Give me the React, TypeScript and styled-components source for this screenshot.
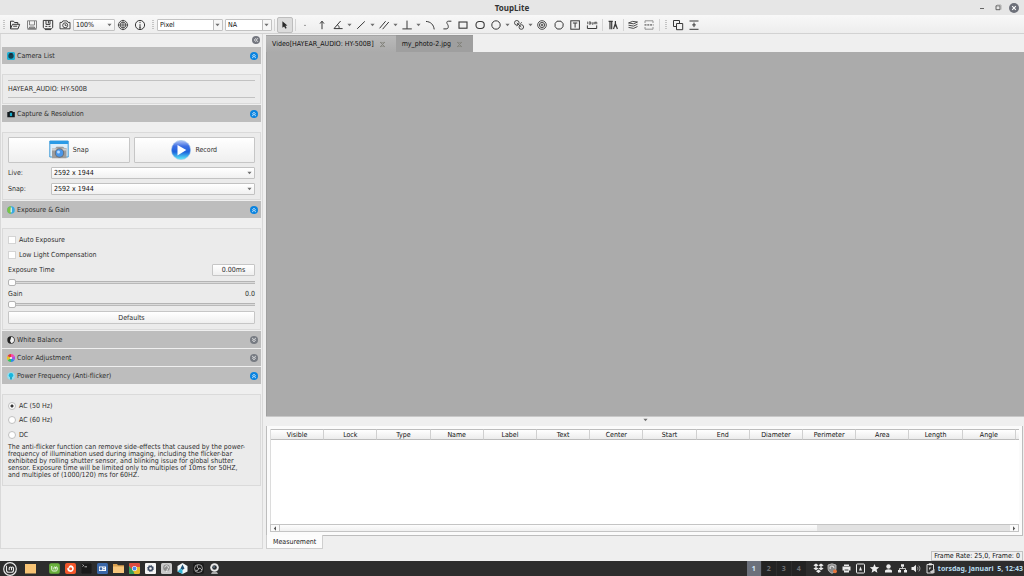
import React from "react";
import styled, { createGlobalStyle, css } from "styled-components";

const uiFont = `"DejaVu Sans Condensed", "DejaVu Sans", sans-serif`;
const deskFont = `"Noto Sans", sans-serif`;

const GlobalStyle = createGlobalStyle`
  * { box-sizing: border-box; }
  body { margin: 0; background: #efefef; }
  button, input, select { font: inherit; color: inherit; margin: 0; padding: 0; }
  svg { display: block; flex: none; }
`;

const Page = styled.div`
  display: flex;
  flex-direction: column;
  min-height: 100vh;
  background: #efefef;
  color: #2e2e2e;
  font: 7px/8px ${uiFont};
  white-space: nowrap;
`;

/* ---------- title bar ---------- */
const TitleBar = styled.header`
  display: grid;
  grid-template-columns: 1fr auto 1fr;
  align-items: center;
  height: 15px;
  background: #e6e6e6;
  color: #333;
`;
const Title = styled.h1`
  grid-column: 2;
  margin: 0;
  font: bold 8px/12px ${deskFont};
`;
const WindowButtons = styled.div`
  display: flex;
  justify-content: flex-end;
  gap: 6px;
  padding-right: 5px;
`;
const PlainButton = styled.button`
  display: flex;
  align-items: center;
  justify-content: center;
  width: 10px;
  height: 10px;
  border: 0;
  background: none;
`;

/* ---------- toolbar ---------- */
const Toolbar = styled.div`
  display: flex;
  align-items: center;
  height: 19px;
  padding-top: 2px;
  background: linear-gradient(#f8f8f8, #ededed);
  border-bottom: 1px solid #d2d2d2;
`;
const ToolGroup = styled.div<{ $width: number }>`
  display: flex;
  flex: none;
  align-items: center;
  justify-content: space-between;
  width: ${(p) => p.$width}px;
`;
const ToolButton = styled.button<{ $pressed?: boolean }>`
  display: flex;
  flex: none;
  align-items: center;
  justify-content: center;
  width: 16px;
  height: 16px;
  border: 1px solid transparent;
  border-radius: 2px;
  background: none;
  ${(p) =>
    p.$pressed &&
    css`
      background: #dcdcdc;
      border-color: #bdbdbd;
    `}
`;
const CaretButton = styled.button`
  display: flex;
  flex: none;
  align-items: center;
  justify-content: center;
  width: 6px;
  height: 16px;
  border: 0;
  background: none;
`;
const Divider = styled.span<{ $room: number }>`
  flex: none;
  width: ${(p) => p.$room}px;
  height: 12px;
  background: linear-gradient(#d4d4d4, #d4d4d4) center / 1px 100% no-repeat;
`;
const Grip = styled.span<{ $room: number }>`
  flex: none;
  width: ${(p) => p.$room}px;
  height: 10px;
  background: repeating-linear-gradient(#c4c4c4 0 1px, transparent 1px 2px) center / 2px 100% no-repeat;
`;

/* ---------- drop-downs ---------- */
const SelectBox = styled.span<{ $width?: number; $split?: boolean }>`
  display: grid;
  flex: ${(p) => (p.$width ? "none" : "1")};
  width: ${(p) => (p.$width ? p.$width + "px" : "auto")};
  height: 12px;
  align-items: center;
  border: 1px solid #c2c2c2;
  border-radius: 1px;
  color: #111;
  background: ${(p) =>
    p.$split
      ? "linear-gradient(to left, #f6f6f6 8px, #bcbcbc 8px 9px, #fff 9px)"
      : "linear-gradient(#fff, #f0f0f0)"};
  & > * { grid-area: 1 / 1; }
  & > svg { justify-self: end; margin-right: 2px; pointer-events: none; }
`;
const Select = styled.select`
  appearance: none;
  width: 100%;
  height: 10px;
  padding-left: 2px;
  border: 0;
  background: none;
  line-height: 10px;
`;

/* ---------- side panel ---------- */
const Main = styled.main`
  display: grid;
  grid-template-columns: 266px minmax(0, 1fr);
  flex: 1;
`;
const Side = styled.aside`
  width: 263px;
  padding: 0 1px;
  border: 1px solid #d9d9d9;
  border-top: 0;
`;
const SideTop = styled.div`
  display: flex;
  justify-content: flex-end;
  height: 13px;
  padding: 1px 0;
`;
const SectionHead = styled.div`
  display: flex;
  align-items: center;
  justify-content: space-between;
  height: 17px;
  padding: 0 2px 0 5px;
  background: #bdbdbd;
`;
const SectionTitle = styled.h2`
  display: flex;
  align-items: center;
  gap: 2px;
  margin: 0;
  font: inherit;
`;
const Section = styled.section`
  margin-bottom: 1px;
`;
const Group = styled.div<{ $top: number; $bottom: number }>`
  display: flex;
  flex-direction: column;
  margin-top: 10px;
  padding: ${(p) => p.$top}px 5px ${(p) => p.$bottom}px 5px;
  border: 1px solid #dadada;
  background: #ebebeb;
`;
const CameraItem = styled.div`
  padding: 4px 0;
  border: solid #c2c2c2;
  border-width: 1px 0;
`;
const Row = styled.div<{ $height: number }>`
  display: flex;
  align-items: center;
  justify-content: space-between;
  height: ${(p) => p.$height}px;
`;
const FieldLabel = styled.label`
  width: 43px;
`;
const BigButtons = styled.div`
  display: grid;
  grid-template-columns: 1fr 1fr;
  gap: 4px;
  margin-bottom: 2px;
`;
const RaisedButton = styled.button<{ $height: number; $width?: number }>`
  display: flex;
  align-items: center;
  justify-content: center;
  gap: 4px;
  width: ${(p) => (p.$width ? p.$width + "px" : "100%")};
  height: ${(p) => p.$height}px;
  border: 1px solid #c6c6c6;
  border-radius: 1px;
  background: linear-gradient(#fff, #efefef);
`;
const Choice = styled.label<{ $height: number }>`
  display: flex;
  align-items: center;
  gap: 3px;
  height: ${(p) => p.$height}px;
`;
const Tick = styled.input`
  appearance: none;
  width: 8px;
  height: 8px;
  border: 1px solid #d4d4d4;
  background: #fff;
`;
const Dot = styled(Tick)`
  border-radius: 50%;
  border-color: #c0c0c0;
  &:checked { background: radial-gradient(circle, #333 0 1px, #fff 2px); }
`;
const Slider = styled.input`
  appearance: none;
  width: 100%;
  height: 7px;
  background: linear-gradient(#b4b4b4 0 1px, #dadada 1px 2px, #b9b9b9 2px 3px) center / 100% 3px no-repeat;
  &::-webkit-slider-thumb {
    appearance: none;
    width: 8px;
    height: 7px;
    border: 1px solid #b4b4b4;
    border-radius: 2px;
    background: #fff;
  }
`;
const Note = styled.p`
  margin: 2px 0 0;
  line-height: 7px;
`;

/* ---------- work area ---------- */
const Work = styled.div`
  display: flex;
  flex-direction: column;
  min-width: 0;
`;
const DocTabs = styled.div`
  display: flex;
  height: 18px;
  padding-top: 1px;
`;
const DocTab = styled.div<{ $active?: boolean }>`
  display: flex;
  align-items: center;
  gap: 4px;
  padding: 0 8px 0 6px;
  color: #111;
  background: ${(p) => (p.$active ? "linear-gradient(#bababa, #ababab)" : "#9f9f9f")};
  border-top: 1px solid ${(p) => (p.$active ? "#a5a5a5" : "#979797")};
`;
const Canvas = styled.div`
  flex: 1;
  background: #ababab;
  border-left: 1px solid #a0a0a0;
`;
const Splitter = styled.div`
  display: flex;
  justify-content: center;
  height: 10px;
  padding-top: 1px;
  border-top: 1px solid #c8c8c8;
`;
const Sheet = styled.div`
  display: flex;
  flex-direction: column;
  height: 110px;
  margin-right: 1px;
  padding: 3px;
  border: solid #bdbdbd;
  border-width: 0 1px 1px;
  background: #fbfbfb;
`;
const Grid = styled.div`
  flex: 1;
  background: #fff;
  border-left: 1px solid #dcdcdc;
`;
const Table = styled.table`
  width: 100%;
  table-layout: fixed;
  border-collapse: separate;
  border-spacing: 0;
`;
const HeadCell = styled.th`
  height: 11px;
  padding: 0;
  border: solid #bcbcbc;
  border-width: 1px 0;
  border-right: 1px solid #d0d0d0;
  background: linear-gradient(#fff, #ececec);
  color: #111;
  font-weight: normal;
  text-align: center;
`;
const FillCell = styled(HeadCell).attrs({ as: "td" })`
  width: 3px;
  border-right: 0;
`;
const ScrollBar = styled.div`
  display: grid;
  grid-template-columns: 8px 541fr 194fr 8px;
  height: 8px;
  border: 1px solid #c4c4c4;
  background: #e2e2e2;
`;
const ScrollEnd = styled(PlainButton)`
  width: 100%;
  height: 6px;
  background: #fafafa;
`;
const ScrollThumb = styled.div`
  background: linear-gradient(#fdfdfd, #f0f0f0);
  border-left: 1px solid #c4c4c4;
`;
const SheetTab = styled.button`
  align-self: flex-start;
  height: 14px;
  margin-top: -1px;
  padding: 0 6px;
  border: solid #cfcfcf;
  border-width: 0 1px 1px;
  background: #fcfcfc;
  color: #222;
`;
const StatusBar = styled.footer`
  display: flex;
  justify-content: flex-end;
  height: 12px;
  padding: 2px 1px 0 0;
`;
const StatusText = styled.output`
  height: 10px;
  padding: 0 2px;
  border: 1px solid #c2c2c2;
  color: #111;
`;

/* ---------- desktop panel ---------- */
const Taskbar = styled.nav`
  display: flex;
  align-items: center;
  height: 15px;
  background: #2d2d2d;
  font: bold 7px/10px ${deskFont};
`;
const Launchers = styled.div<{ $gap: number; $left: number }>`
  display: flex;
  gap: ${(p) => p.$gap}px;
  margin-left: ${(p) => p.$left}px;
`;
const Launcher = styled(PlainButton)<{ $size: number }>`
  width: ${(p) => p.$size}px;
  height: 15px;
`;
const Spaces = styled.div`
  display: flex;
  gap: 1px;
  margin-left: auto;
`;
const Space = styled.button<{ $active?: boolean }>`
  width: 14px;
  height: 15px;
  border: 0;
  background: ${(p) => (p.$active ? "#6b707b" : "#232323")};
  color: ${(p) => (p.$active ? "#d5e6f7" : "#6f7073")};
`;
const Clock = styled.time`
  margin-right: 1px;
  color: #b9dcee;
  white-space: pre;
`;

/* ---------- drawings ---------- */
const Caret = () => (
  <svg width="5" height="4" viewBox="0 0 5 4"><path d="M.4.8h4.2L2.5 3.2z" fill="#707070" /></svg>
);

type GlyphProps = { children: React.ReactNode; w?: number };
const Glyph = ({ children, w = 1 }: GlyphProps) => (
  <svg width="12" height="12" viewBox="0 0 12 12" fill="none" stroke="#383838" strokeWidth={w}>{children}</svg>
);

const icons: Record<string, React.ReactNode> = {
  Open: <Glyph><path d="M1.5 9.7V2.2h3l1 1.3h3.3v1.6M1.5 9.7l2-4.4h7.2L9 9.9H1.5M4.2 7.2h4" /></Glyph>,
  Save: <Glyph w={0.9}><g stroke="#777"><path d="M1.5 1.8h9v7.6h-9zM3.5 2v4h5V2M1.5 10.3h9" /><path d="M3.5 8h5v1.4h-5z" fill="#aaa" /></g></Glyph>,
  "Save as": <Glyph><path d="M1.3 1.4h9.4v7.2l-1.4 1.2H2.7L1.3 8.6zM4 1.5v3.9h4V1.5M6.4 2v2.4M3.3 7.4h2M6.6 7.4h2M3 10.6h6" /></Glyph>,
  Snapshot: <Glyph w={0.9}><path d="M1 3.4h2l.9-1.5h4.2L9 3.4h2v6.4H1z" /><circle cx="6.2" cy="6.3" r="2.5" /><path d="M6.2 4.9v1.6h1.3" /></Glyph>,
  Track: <Glyph w={0.9}><circle cx="6" cy="6" r="4.5" /><circle cx="6" cy="6" r="2.8" /><circle cx="6" cy="6" r="1.2" /><path d="M6 .8v2.400M6 8.800v2.400M.8 6h2.400M8.800 6h2.400" strokeWidth=".6" /></Glyph>,
  Info: <Glyph><circle cx="6" cy="6" r="4.6" /><path d="M6 5.2v3.9M6 2.8v1.3M5 9h2" /></Glyph>,
  Select: <Glyph><path d="M3.4 2.2v6.6l1.7-1.4 1.4 2.4 1.2-.7-1.3-2.3 2-.4z" fill="#2a2a2a" stroke="none" /></Glyph>,
  Point: <Glyph><circle cx="6" cy="6.3" r=".6" fill="#444" stroke="none" /></Glyph>,
  Arrow: <Glyph><path d="M6 10.2V2.4M4 4.6l2-2.4 2 2.4" /></Glyph>,
  Angle: <Glyph><path d="M8.600 2 2 9.600h8.600M5.300 5.800c1.500.7 2 2.200 1.800 3.800" /></Glyph>,
  Line: <Glyph><path d="M2.200 9.800 9.800 2.400" /></Glyph>,
  Parallel: <Glyph><path d="M1.600 9.300 7.600 2.200M4.600 10.200l6.200-7.200" /></Glyph>,
  Perpendicular: <Glyph><path d="M6 1.600v8.200M1.400 9.900h9.400" /></Glyph>,
  Arc: <Glyph><path d="M2 2.400c4.800.4 7.600 3.200 8.200 8" /></Glyph>,
  Curve: <Glyph><path d="M10.400 2.200H7.600C5.200 2.200 5.600 4 6.600 5.400S7.800 9.900 5.200 9.900H2.400" /></Glyph>,
  Rectangle: <Glyph w={1.100}><rect x="2" y="3" width="8" height="6.200" /></Glyph>,
  Ellipse: <Glyph w={1.100}><rect x="2" y="2.500" width="8.200" height="7" rx="3.200" /></Glyph>,
  Circle: <Glyph><circle cx="6" cy="6" r="4.200" /></Glyph>,
  "Two circles": <Glyph w={0.9}><circle cx="3.800" cy="3.800" r="2.300" /><circle cx="8.300" cy="8" r="2.300" /><path d="m3.800 3.800 4.500 4.200M3.500 6.800l1.500-1M7.300 4.600l1.600-1.200" /></Glyph>,
  Annulus: <Glyph w={0.9}><circle cx="6" cy="6" r="4.300" /><circle cx="6" cy="6" r="2.600" /><circle cx="6" cy="6" r=".9" /></Glyph>,
  Polygon: <Glyph><path d="M4 2.200h4l2.200 2.600-.3 3L7.800 10H4.200L2.100 7.600V4.500z" /></Glyph>,
  Text: <Glyph><rect x="1.800" y="1.800" width="8.600" height="8.400" /><path d="M3.900 4h4.400M6.100 4v4.600" /></Glyph>,
  "Scale bar": <Glyph><path d="M1.400 6.400v3.100h9.300V6.400" /><path d="M1.600 2.600v2.600M3.200 2.800v2.400h1.300V2.800zM6 3.200v2h1.200v-2M8.600 5.200v-2h2.200v2M9.700 3.200v2" strokeWidth=".7" /></Glyph>,
  Calibrate: <Glyph><path d="M1.600 2.400h4.200M3 2.400v7.800M4.700 2.400v7.800M8.400 2v2.500L6.500 10M8.400 4.500 10.400 10M7.300 7h2.300" strokeWidth="1.200" /></Glyph>,
  Layers: <Glyph w={0.9}><path d="m1.500 4 4-1.600 5 .6-3.800 1.800zM1.500 6.200l5 .9 4-1.900M1.500 8.400l5 1 4-1.900" /></Glyph>,
  Export: <Glyph w={0.9}><g stroke="#888"><path d="M2 4V1.800h8V4M2 8v2.200h8V8" /><path d="M1.500 5.900h9" strokeWidth="1.800" strokeDasharray="2 .8" /></g></Glyph>,
  Copy: <Glyph><path d="M1.500 1.500h6v6h-6z" /><path d="M4.500 4.500h6.200v6.200H4.500z" fill="#f2f2f2" /></Glyph>,
  Fit: <Glyph><path d="M1.500 2h9M1.500 10.300h9M6 3.600v4.500M4.200 5.900h3.600" /></Glyph>,
};

const Tool = ({ name, pressed }: { name: string; pressed?: boolean }) => (
  <ToolButton type="button" aria-label={name} title={name} $pressed={pressed}>{icons[name]}</ToolButton>
);
const ToolCaret = ({ of }: { of: string }) => (
  <CaretButton type="button" aria-label={of + " options"}><Caret /></CaretButton>
);

const CloseMark = () => (
  <svg width="7" height="7" viewBox="0 0 7 7" stroke="#82827a" strokeWidth=".9" fill="none">
    <path d="m1 1 5 5M6 1 1 6M2.300.9l1.200 1.300L4.700.9M2.300 6.100l1.200-1.300 1.200 1.300" />
  </svg>
);

const ChevronDisc = ({ color, turn = 0 }: { color: string; turn?: number }) => (
  <svg width="8" height="8" viewBox="0 0 8 8">
    <circle cx="4" cy="4" r="4" fill={color} />
    <g fill="none" stroke="#fff" strokeWidth=".8" transform={`rotate(${turn} 4 4)`}>
      <path d="M2.200 4 4 2.400 5.800 4M2.200 5.900 4 4.300l1.800 1.600" />
    </g>
  </svg>
);

const sectionIcons = {
  camera: <svg width="8" height="8" viewBox="0 0 8 8"><rect width="8" height="8" rx="1.500" fill="#1fb0d4" /><circle cx="4" cy="4" r="2.700" fill="#17414f" /><path d="M2 1.300 4 3l2-1.700" fill="#123" /></svg>,
  capture: <svg width="8" height="8" viewBox="0 0 8 8"><path d="M.3 2h1.900l.5-1h2.600l.6 1h1.900v5.200H.3z" fill="#141a1e" /><rect x="2.900" y="2.800" width="2.200" height="3.300" fill="#14a9c9" /></svg>,
  exposure: <svg width="8" height="8" viewBox="0 0 8 8"><circle cx="4" cy="4" r="3.800" fill="#38a9e0" /><path d="M4 .2a3.800 3.800 0 0 0 0 7.600z" fill="#7cc344" /><path d="M3.700 1.500h1.200v4.800H3.500z" fill="#d8f0f4" /></svg>,
  balance: <svg width="8" height="8" viewBox="0 0 8 8"><circle cx="4" cy="4" r="3.700" fill="#222" /><path d="M4.300.8a3.300 3.300 0 0 1 0 6.500L3 5z" fill="#f2f2f2" /></svg>,
  color: <svg width="8" height="8" viewBox="0 0 8 8"><path d="M4 4V0a4 4 0 0 1 3.500 2z" fill="#f4a" /><path d="M4 4l3.500-2a4 4 0 0 1 0 4z" fill="#b04be0" /><path d="M4 4l3.500 2A4 4 0 0 1 4 8z" fill="#2a8be8" /><path d="M4 4v4a4 4 0 0 1-3.500-2z" fill="#35c25a" /><path d="M4 4 .5 6a4 4 0 0 1 0-4z" fill="#e9c52b" /><path d="M4 4 .5 2A4 4 0 0 1 4 0z" fill="#e23a35" /><circle cx="4" cy="4" r="1" fill="#fff" /></svg>,
  power: <svg width="8" height="8" viewBox="0 0 8 8"><circle cx="4" cy="4" r="3.800" fill="#8edff0" /><circle cx="4" cy="3.300" r="2.200" fill="#16b6de" /><path d="M3 5h2v2.500H3z" fill="#2aa5c5" /></svg>,
};

const SnapArt = () => (
  <svg width="20" height="20" viewBox="0 0 20 20">
    <path d="M.8 1h18.400v16H.8z" fill="#dceefa" stroke="#2f93d6" strokeWidth=".9" />
    <path d="M.8 1h18.400v3H.8z" fill="#2a9be6" />
    <path d="M3 8.500h3l1.500-1.800h6.500L15.500 8h2v10.200H3z" fill="#9c9c9c" />
    <path d="M3 8.500h14.500v2H3z" fill="#d0d0d0" />
    <circle cx="10.500" cy="13" r="4.700" fill="#6b7177" />
    <circle cx="10.500" cy="13" r="3.700" fill="#4a96e8" />
    <circle cx="9.500" cy="12" r="1.500" fill="#b8dcff" />
  </svg>
);
const RecordArt = () => (
  <svg width="20" height="20" viewBox="0 0 20 20">
    <defs>
      <linearGradient id="play" x1="0" y1="0" x2="0" y2="1">
        <stop offset="0" stopColor="#b5c8f4" /><stop offset=".3" stopColor="#3d6fe4" />
        <stop offset=".6" stopColor="#1c63dc" /><stop offset="1" stopColor="#5ff0fa" />
      </linearGradient>
    </defs>
    <circle cx="10" cy="10" r="9.600" fill="url(#play)" stroke="#9cc3ea" strokeWidth=".6" />
    <path d="M6.500 5v10.400L15.300 10z" fill="#fff" />
  </svg>
);

const Mint = ({ s, c, bg }: { s: number; c: string; bg: string }) => (
  <svg width={s} height={s} viewBox="0 0 14 14" fill="none" stroke={c}>
    {bg === "none" ? <circle cx="7" cy="7" r="6.300" strokeWidth="1.200" /> : <rect x=".2" y=".2" width="13.600" height="13.600" rx="2.500" fill={bg} stroke="none" />}
    <path d="M3.500 3.800v4.400c0 1.300.8 2 2 2h3c1.200 0 2-.7 2-2V6.300c0-1.700-2-1.700-2 0v1.900M8.500 6.300c0-1.700-2.300-1.700-2.300 0v1.900" strokeWidth="1.100" />
  </svg>
);
const AppIcon = ({ children }: { children: React.ReactNode }) => (
  <svg width="11" height="11" viewBox="0 0 11 11">{children}</svg>
);
const launchers: [string, React.ReactNode][] = [
  ["Software", <Mint s={11} c="#fff" bg="#69b03c" />],
  ["Firefox", <AppIcon><rect width="11" height="11" rx="2" fill="#f4572b" /><path d="M5.500 2.300a3.300 3.300 0 1 1-3.200 2.500l.9.700c.3-1.500 1-2.500 2.300-3.200z" fill="#fff" /><circle cx="5.700" cy="5.800" r="1.500" fill="#f4572b" /></AppIcon>],
  ["Terminal", <AppIcon><rect width="11" height="11" rx="1.500" fill="#1a1a1a" stroke="#3c3c3c" strokeWidth=".5" /><path d="m1.500 1.500 1.200 1-1.200 1M3.500 3.800h2.500" stroke="#ddd" fill="none" strokeWidth=".8" /></AppIcon>],
  ["Files", <AppIcon><rect width="11" height="11" rx="1.500" fill="#3a67a8" /><path d="M2 3.500h7V8H2z" fill="#fff" /><path d="M3 4.700h2v2H3zM6 4.700h2M6 6.500h2" fill="#3a67a8" stroke="#3a67a8" strokeWidth=".6" /></AppIcon>],
  ["Folder", <AppIcon><path d="M0 1h4l1 1.300h6V10H0z" fill="#d9a04f" /><path d="M0 3.500h11V10H0z" fill="#f7c67c" /></AppIcon>],
  ["Chrome", <AppIcon><rect width="11" height="11" rx="1.500" fill="#e3b92c" /><path d="M0 1.500Q0 0 1.500 0h8Q11 0 11 1.500V4H5.500L3 7 0 3z" fill="#dd4b3e" /><path d="M0 3l4 4.500L5.500 11h-4Q0 11 0 9.500z" fill="#35a058" /><circle cx="5.500" cy="5.500" r="2.500" fill="#fff" /><circle cx="5.500" cy="5.500" r="1.900" fill="#4a86ee" /></AppIcon>],
  ["Settings", <AppIcon><rect width="11" height="11" rx="1" fill="#f5f5f5" /><circle cx="5.500" cy="5.500" r="2" fill="none" stroke="#3b4a63" strokeWidth="1.400" /><circle cx="5.500" cy="5.500" r="3.100" fill="none" stroke="#3b4a63" strokeWidth="1" strokeDasharray="1.200 1.200" /></AppIcon>],
  ["Audio", <AppIcon><rect width="11" height="11" rx="1.500" fill="#c9c9c9" /><circle cx="5.500" cy="4.800" r="3.300" fill="#8b8b8b" /><path d="M3.800 4.500a1.800 1.800 0 1 1 2.600 1.600L5.500 9" stroke="#eee" fill="none" strokeWidth=".9" /></AppIcon>],
  ["Slicer", <AppIcon><path d="m5.500 0 5 3v5.500l-5 2.500-5-2.500V3z" fill="#f2f6f8" /><path d="m5.500 1.500 2 4-2 1.500-2-1.500z" fill="#1e4f74" /><path d="m.5 8.500 3-3 2 1.500v4zM10.500 8.500l-3-3" fill="#35b6d6" /></AppIcon>],
  ["OBS", <AppIcon><rect width="11" height="11" rx="2" fill="#1c1c1c" /><circle cx="5.500" cy="5.500" r="4" fill="none" stroke="#bbb" strokeWidth=".8" /><path d="M5.500 5.500c-1.500-1-1.500-2.500-.5-3.300M5.500 5.500c1.700-.7 3 .2 3.200 1.500M5.500 5.500c0 1.800-1.400 2.500-2.700 2" stroke="#ccc" fill="none" strokeWidth=".9" /></AppIcon>],
  ["Webcam", <AppIcon><circle cx="5.500" cy="4.500" r="4.300" fill="#e9e9e9" /><circle cx="5.500" cy="4.500" r="2.300" fill="#2a2e33" /><circle cx="5" cy="4" r=".7" fill="#8fb2d0" /><path d="M3 9.200h5l1 1.500H2z" fill="#d5d5d5" /></AppIcon>],
];

const Tray = ({ children }: { children: React.ReactNode }) => (
  <svg width="11" height="11" viewBox="0 0 11 11" fill="#ececec">{children}</svg>
);
const trayItems: [string, React.ReactNode][] = [
  ["Dropbox", <Tray><path d="M3 .6 5.500 2.200 3 3.900.4 2.200zM8 .6l2.600 1.600L8 3.900 5.500 2.200zM3 3.900l2.500 1.700L3 7.200.4 5.600zM8 3.900l2.600 1.700L8 7.200 5.500 5.600zM5.500 6.600 8 8.200 5.500 10 3 8.200z" /></Tray>],
  ["Updates", <Tray><path d="M5 .8 9 2v3.500C9 8 7 9.500 5 10.300 3 9.500 1 8 1 5.500V2z" fill="#8a8a8a" stroke="#ccc" strokeWidth=".8" /><path d="M3.200 6a2 2 0 1 1 3.800-.8" fill="none" stroke="#eee" /><circle cx="8" cy="8.300" r="1.900" fill="#e8743b" /></Tray>],
  ["Printer", <Tray><path d="M3 1.500h5V3H3zM1.500 3.600h8v4h-8zM3 6.600h5v3H3z" /><path d="M3.600 6.500h3.800v1H3.600z" fill="#444" /></Tray>],
  ["Keyboard", <Tray><rect x="1.500" y="1" width="8" height="9" rx=".8" fill="none" stroke="#ececec" /><path d="M4 7.500 5.500 3.500 7 7.500z" /></Tray>],
  ["Favourites", <Tray><path d="m5.500 1 1.300 3 3.400.3-2.600 2.200.8 3.300-2.900-1.700-2.900 1.700.8-3.300L.8 4.300 4.200 4z" /></Tray>],
  ["User", <Tray><circle cx="5.500" cy="3.500" r="2.200" /><path d="M2 9.500V8c0-1 1.500-1.800 3.500-1.800S9 7 9 8v1.500z" /></Tray>],
  ["Network", <Tray><path d="M4 1.200h3v2.600H4zM1 7h3v2.600H1zM7 7h3v2.600H7z" /><path d="M5.500 4v1.500M2.500 7V5.500h6V7" fill="none" stroke="#ececec" strokeWidth=".8" /></Tray>],
  ["Volume", <Tray><path d="M.5 4h2L5 1.700v7.600L2.500 7h-2z" /><path d="M6.300 3.800c.8 1 .8 2.400 0 3.400M7.800 2.600c1.500 1.700 1.500 4.100 0 5.800" fill="none" stroke="#bbb" strokeWidth=".8" /></Tray>],
  ["Clipboard", <Tray><path d="M2 1.500h6.500v8.500H2z" fill="none" stroke="#ddd" /><path d="M3.800.3h3v2h-3z" /><path d="M4 7V4.500h2.500M5 8.500 9.500 6v4H6z" fill="#ccc" /></Tray>],
];

/* ---------- assembled parts ---------- */
type DropProps = { label: string; value: string; width?: number; split?: boolean; id?: string };
const Drop = ({ label, value, width, split, id }: DropProps) => (
  <SelectBox $width={width} $split={split}>
    <Select id={id} aria-label={label} defaultValue={value}><option>{value}</option></Select>
    <Caret />
  </SelectBox>
);

type PaneProps = { icon: keyof typeof sectionIcons; title: string; open?: boolean; children?: React.ReactNode };
const Pane = ({ icon, title, open, children }: PaneProps) => (
  <Section>
    <SectionHead>
      <SectionTitle>{sectionIcons[icon]}{title}</SectionTitle>
      <PlainButton type="button" aria-label={title} aria-expanded={!!open}>
        <ChevronDisc color={open ? "#0a84e0" : "#777b82"} turn={open ? 0 : 180} />
      </PlainButton>
    </SectionHead>
    {children}
  </Section>
);

const columns = ["Visible", "Lock", "Type", "Name", "Label", "Text", "Center", "Start", "End", "Diameter", "Perimeter", "Area", "Length", "Angle"];

export default function App() {
  return (
    <Page>
      <GlobalStyle />
      <TitleBar>
        <Title>ToupLite</Title>
        <WindowButtons>
          <PlainButton type="button" aria-label="Minimize">
            <svg width="6" height="6" viewBox="0 0 6 6"><path d="M1 3.500h4" stroke="#666" /></svg>
          </PlainButton>
          <PlainButton type="button" aria-label="Restore">
            <svg width="7" height="7" viewBox="0 0 7 7" fill="none" stroke="#555" strokeWidth=".9"><path d="M1 1.800h4v3.900H1z" /><path d="M2 1h4v4.500" stroke="#aaa" /></svg>
          </PlainButton>
          <PlainButton type="button" aria-label="Close">
            <svg width="10" height="10" viewBox="0 0 10 10"><circle cx="5" cy="5" r="5" fill="#6d7079" /><path d="m3.200 3.200 3.600 3.600M6.800 3.200 3.200 6.800" stroke="#fff" strokeWidth="1.100" /></svg>
          </PlainButton>
        </WindowButtons>
      </TitleBar>

      <Toolbar>
        <Grip $room={7} />
        <ToolGroup $width={66}>
          <Tool name="Open" /><Tool name="Save" /><Tool name="Save as" /><Tool name="Snapshot" />
        </ToolGroup>
        <Drop label="Zoom" value="100%" width={42} />
        <ToolGroup $width={33}><Tool name="Track" /><Tool name="Info" /></ToolGroup>
        <Grip $room={9} />
        <ToolGroup $width={115}>
          <Drop label="Unit" value="Pixel" width={66} split />
          <Drop label="Magnification" value="NA" width={47} split />
        </ToolGroup>
        <Divider $room={5} />
        <Tool name="Select" pressed />
        <Divider $room={4} />
        <ToolGroup $width={303}>
          <Tool name="Point" /><Tool name="Arrow" />
          <Tool name="Angle" /><ToolCaret of="Angle" />
          <Tool name="Line" /><ToolCaret of="Line" />
          <Tool name="Parallel" /><ToolCaret of="Parallel" />
          <Tool name="Perpendicular" /><ToolCaret of="Perpendicular" />
          <Tool name="Arc" /><Tool name="Curve" /><Tool name="Rectangle" /><Tool name="Ellipse" />
          <Tool name="Circle" /><ToolCaret of="Circle" />
          <Tool name="Two circles" /><ToolCaret of="Two circles" />
          <Tool name="Annulus" /><Tool name="Polygon" /><Tool name="Text" /><Tool name="Scale bar" />
        </ToolGroup>
        <Divider $room={5} />
        <Tool name="Calibrate" />
        <Divider $room={4} />
        <ToolGroup $width={32}><Tool name="Layers" /><Tool name="Export" /></ToolGroup>
        <Divider $room={5} />
        <Grip $room={8} />
        <ToolGroup $width={32}><Tool name="Copy" /><Tool name="Fit" /></ToolGroup>
      </Toolbar>

      <Main>
        <Side>
          <SideTop>
            <PlainButton type="button" aria-label="Hide panel"><ChevronDisc color="#74777f" turn={-90} /></PlainButton>
          </SideTop>
          <Pane icon="camera" title="Camera List" open>
            <Group $top={5} $bottom={5}><CameraItem>HAYEAR_AUDIO: HY-500B</CameraItem></Group>
          </Pane>
          <Pane icon="capture" title="Capture & Resolution" open>
            <Group $top={4} $bottom={3}>
              <BigButtons>
                <RaisedButton type="button" $height={26}><SnapArt />Snap</RaisedButton>
                <RaisedButton type="button" $height={26}><RecordArt />Record</RaisedButton>
              </BigButtons>
              <Row $height={16}>
                <FieldLabel htmlFor="live">Live:</FieldLabel>
                <Drop id="live" label="Live" value="2592 x 1944" />
              </Row>
              <Row $height={15}>
                <FieldLabel htmlFor="snap">Snap:</FieldLabel>
                <Drop id="snap" label="Snap" value="2592 x 1944" />
              </Row>
            </Group>
          </Pane>
          <Pane icon="exposure" title="Exposure & Gain" open>
            <Group $top={3} $bottom={4}>
              <Choice $height={15}><Tick type="checkbox" />Auto Exposure</Choice>
              <Choice $height={15}><Tick type="checkbox" />Low Light Compensation</Choice>
              <Row $height={15}>
                <label htmlFor="time">Exposure Time</label>
                <RaisedButton type="button" $height={12} $width={43}>0.00ms</RaisedButton>
              </Row>
              <Row $height={11}><Slider id="time" type="range" defaultValue={0} /></Row>
              <Row $height={11}><label htmlFor="gain">Gain</label><span>0.0</span></Row>
              <Row $height={11}><Slider id="gain" type="range" defaultValue={0} /></Row>
              <Row $height={15}><RaisedButton type="button" $height={13}>Defaults</RaisedButton></Row>
            </Group>
          </Pane>
          <Pane icon="balance" title="White Balance" />
          <Pane icon="color" title="Color Adjustment" />
          <Pane icon="power" title="Power Frequency (Anti-flicker)" open>
            <Group $top={3} $bottom={6}>
              <Choice $height={15}><Dot type="radio" name="hz" defaultChecked />AC (50 Hz)</Choice>
              <Choice $height={14}><Dot type="radio" name="hz" />AC (60 Hz)</Choice>
              <Choice $height={15}><Dot type="radio" name="hz" />DC</Choice>
              <Note>
                The anti-flicker function can remove side-effects that caused by the power-<br />
                frequency of illumination used during imaging, including the flicker-bar<br />
                exhibited by rolling shutter sensor, and blinking issue for global shutter<br />
                sensor. Exposure time will be limited only to multiples of 10ms for 50HZ,<br />
                and multiples of (1000/120) ms for 60HZ.
              </Note>
            </Group>
          </Pane>
        </Side>

        <Work>
          <DocTabs>
            <DocTab $active>Video[HAYEAR_AUDIO: HY-500B]<PlainButton type="button" aria-label="Close video"><CloseMark /></PlainButton></DocTab>
            <DocTab>my_photo-2.jpg<PlainButton type="button" aria-label="Close photo"><CloseMark /></PlainButton></DocTab>
          </DocTabs>
          <Canvas />
          <Splitter><Caret /></Splitter>
          <Sheet>
            <Grid>
              <Table>
                <thead>
                  <tr>{columns.map((c) => <HeadCell key={c}>{c}</HeadCell>)}<FillCell /></tr>
                </thead>
              </Table>
            </Grid>
            <ScrollBar>
              <ScrollEnd type="button" aria-label="Scroll left"><svg width="4" height="5" viewBox="0 0 4 5"><path d="M3 .3v4.400L.8 2.500z" fill="#555" /></svg></ScrollEnd>
              <ScrollThumb /><span />
              <ScrollEnd type="button" aria-label="Scroll right"><svg width="4" height="5" viewBox="0 0 4 5"><path d="M1 .3v4.400l2.200-2.200z" fill="#555" /></svg></ScrollEnd>
            </ScrollBar>
          </Sheet>
          <SheetTab type="button">Measurement</SheetTab>
        </Work>
      </Main>

      <StatusBar><StatusText>Frame Rate: 25,0, Frame: 0</StatusText></StatusBar>

      <Taskbar>
        <Launchers $gap={5} $left={2}>
          <Launcher type="button" aria-label="Menu" $size={15}><Mint s={14} c="#e8e8e8" bg="none" /></Launcher>
          <Launcher type="button" aria-label="Desktop" $size={16}><svg width="11" height="11" viewBox="0 0 11 11"><path d="M0 1h11v9.500H0z" fill="#f8c475" /></svg></Launcher>
        </Launchers>
        <Launchers $gap={0} $left={8}>
          {launchers.map(([name, art]) => <Launcher key={name} type="button" aria-label={name} $size={16}>{art}</Launcher>)}
        </Launchers>
        <Spaces>
          <Space type="button" $active>1</Space><Space type="button">2</Space><Space type="button">3</Space><Space type="button">4</Space>
        </Spaces>
        <Launchers $gap={0} $left={6}>
          {trayItems.map(([name, art]) => <Launcher key={name} type="button" aria-label={name} $size={14}>{art}</Launcher>)}
        </Launchers>
        <Clock>torsdag, januari  5, 12:43</Clock>
      </Taskbar>
    </Page>
  );
}
